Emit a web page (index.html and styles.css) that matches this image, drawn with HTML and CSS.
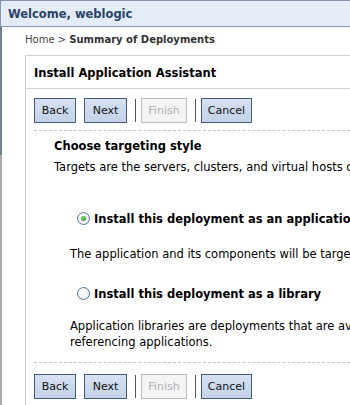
FILE: index.html
```html
<!DOCTYPE html>
<html lang="en">
<head>
    <meta charset="UTF-8">
    <title>Install Application Assistant</title>
    <link rel="stylesheet" href="styles.css">
</head>
<body>
    <div class="welcome">Welcome, weblogic</div>

    <div class="page">
        <div class="crumb">Home &gt; <b>Summary of Deployments</b></div>

        <div class="assistant">
            <div class="assistant-title">Install Application Assistant</div>

            <div class="buttons">
                <button class="btn back">Back</button>
                <button class="btn next">Next</button>
                <span class="sep"></span>
                <button class="btn finish" disabled>Finish</button>
                <span class="sep"></span>
                <button class="btn cancel">Cancel</button>
            </div>

            <div class="section">
                <h3>Choose targeting style</h3>
                <p class="intro">Targets are the servers, clusters, and virtual hosts on which this deployment will run.</p>

                <label class="option first">
                    <span class="radio checked"></span>
                    Install this deployment as an application
                </label>
                <p class="desc">The application and its components will be targeted to the same locations.</p>

                <label class="option second">
                    <span class="radio"></span>
                    Install this deployment as a library
                </label>
                <p class="desc">Application libraries are deployments that are available for other deployments to share.<br>referencing applications.</p>
            </div>

            <div class="buttons bottom">
                <button class="btn back">Back</button>
                <button class="btn next">Next</button>
                <span class="sep"></span>
                <button class="btn finish" disabled>Finish</button>
                <span class="sep"></span>
                <button class="btn cancel">Cancel</button>
            </div>
        </div>
    </div>
</body>
</html>
```

FILE: styles.css
```css
body {
    margin: 0;
    width: 350px;
    height: 405px;
    overflow: hidden;
    font-family: Tahoma, "DejaVu Sans", sans-serif;
    color: #000;
    background: #fff;
}

/* Header bar */
.welcome {
    height: 25px;
    line-height: 26px;
    padding-left: 7px;
    background-color: #e4ecf8;
    border: 1px solid #8496ae;
    border-right: none;
    font-size: 11.5px;
    font-weight: bold;
    color: #2a4466;
    white-space: nowrap;
}

.page {
    padding-left: 23px;
    height: 378px;
    border-left: 2px solid;
    border-image: linear-gradient(#6e7f98 0, #6e7f98 128px, #a9a9a9 128px) 1;
}

.crumb {
    height: 28px;
    line-height: 25px;
    font-size: 10px;
    color: #444;
    white-space: nowrap;
}

.crumb b {
    color: #333;
}

/* Assistant box */
.assistant {
    border-top: 1px solid #d0d0d0;
    border-left: 1px solid #d0d0d0;
    height: 360px;
}

.assistant-title {
    height: 32px;
    line-height: 35px;
    padding-left: 8px;
    font-size: 11.5px;
    font-weight: bold;
    border-bottom: 1px solid #d0d0d0;
    white-space: nowrap;
}

.buttons {
    display: flex;
    align-items: center;
    gap: 8px;
    margin-left: 8px;
    padding: 9px 0 7px;
    border-bottom: 1px dashed #c4c4c4;
}

.buttons.bottom {
    border-bottom: none;
    border-top: 1px dashed #c4c4c4;
    padding-top: 11px;
}

.btn {
    height: 25px;
    padding: 0;
    font-family: Tahoma, "DejaVu Sans", sans-serif;
    font-size: 11px;
    color: #111;
    background: linear-gradient(#d6e1f0, #c3d2e8);
    border: 1px solid #44587a;
    border-radius: 0;
}

.btn.back { width: 42px; }
.btn.next { width: 43px; }
.btn.finish { width: 46px; }
.btn.cancel { width: 51px; }

.btn[disabled] {
    color: #b0b0b0;
    background: #f4f4f4;
    border-color: #bcbcbc;
}

.sep {
    width: 1px;
    height: 23px;
    margin-right: -3px;
    background-color: #555;
}

/* Content */
.section {
    padding-left: 28px;
    white-space: nowrap;
    height: 231px;
}

.section h3 {
    margin: 0;
    padding-top: 7px;
    font-size: 11.5px;
    line-height: 16px;
}

.intro {
    margin: 5px 0 0;
    font-size: 11.5px;
    line-height: 16px;
}

.option {
    display: flex;
    align-items: center;
    gap: 4px;
    height: 15px;
    margin-left: 23px;
    font-size: 11.5px;
    font-weight: bold;
}

.option.first {
    margin-top: 36px;
}

.option.second {
    margin-top: 24px;
}

.desc {
    margin: 20px 0 0 16px;
    font-size: 11.5px;
    line-height: 16px;
}

.option.second + .desc {
    margin-top: 17px;
}

.radio {
    flex-shrink: 0;
    width: 11px;
    height: 11px;
    border: 1px solid #5d7696;
    border-radius: 50%;
    background: radial-gradient(circle at 40% 40%, #fff, #dfe6ef);
    position: relative;
}

.radio.checked::after {
    content: "";
    position: absolute;
    left: 3px;
    top: 3px;
    width: 5px;
    height: 5px;
    border-radius: 50%;
    background: radial-gradient(circle at 40% 40%, #7ad36a, #2c8a22);
}
```
